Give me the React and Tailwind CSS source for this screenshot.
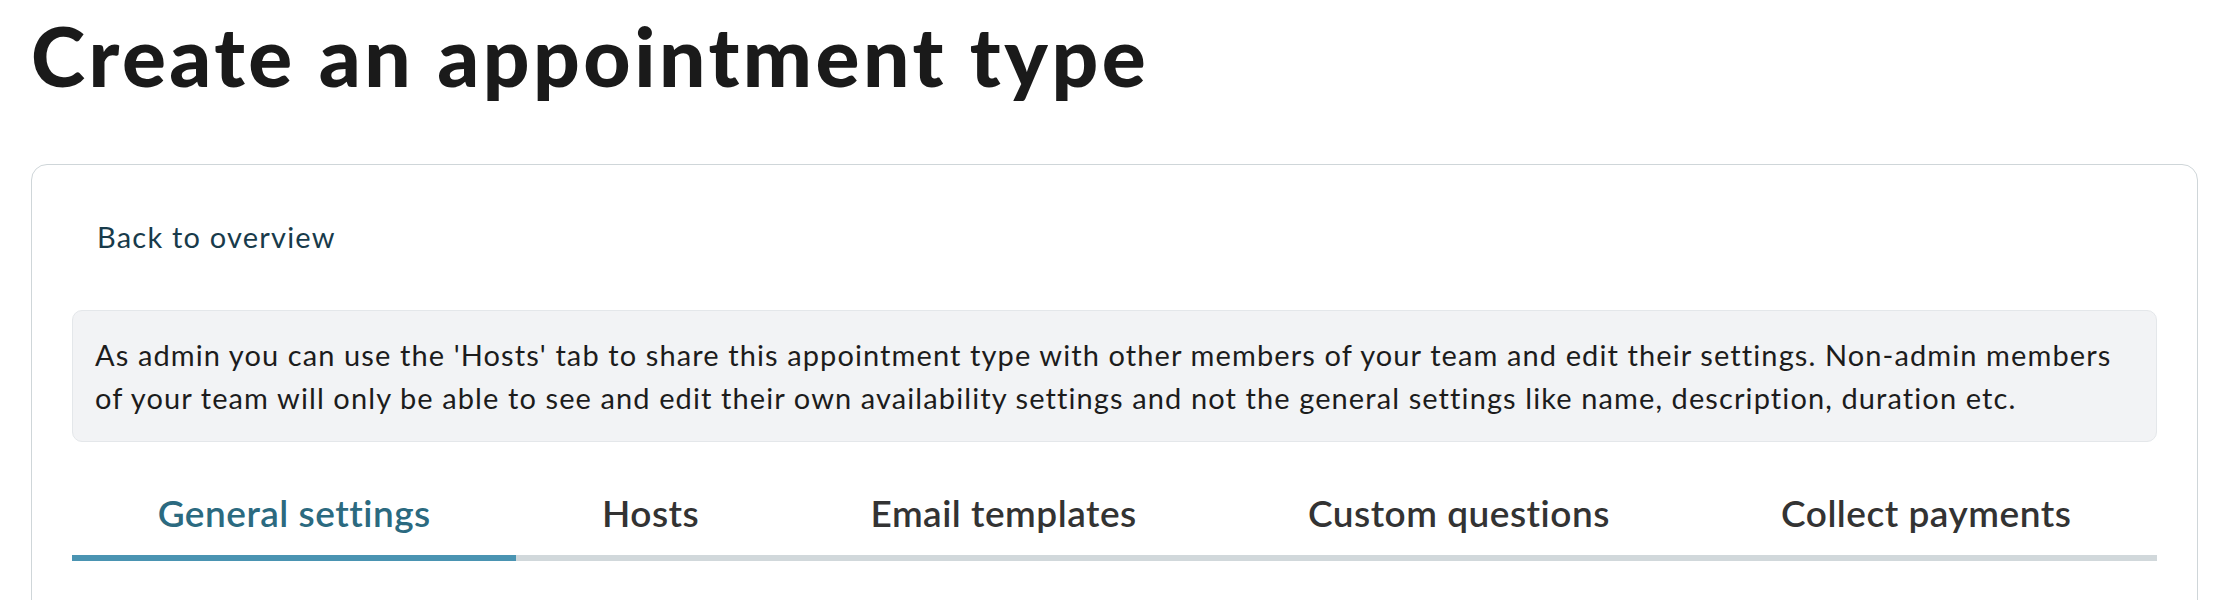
import { useState } from "react";

const tabs = [
  "General settings",
  "Hosts",
  "Email templates",
  "Custom questions",
  "Collect payments",
];

const App = () => {
  const [active, setActive] = useState(0);

  return (
    <div className="min-h-screen bg-white pl-[31px] pr-[34px] font-['Lato',sans-serif]">
      {/* Header */}
      <h1 className="pt-[14px] mb-[68px] font-['Lato_Black','Lato',sans-serif] text-[82px] leading-none font-black tracking-[3.5px] text-[#1a1a1a]">
        Create an appointment type
      </h1>

      {/* Card */}
      <div className="rounded-[16px] border border-[#cfd6d9] bg-white px-[40px] pt-[51px] pb-[120px]">
        <a
          href="#"
          className="ml-[25px] block text-[29px] leading-[42px] tracking-[1.2px] text-[#183b4b]"
        >
          Back to overview
        </a>

        <div className="mt-[52px] rounded-[10px] border border-[#e4e7ea] bg-[#f2f3f5] px-[22px] py-[22px] text-[29px] leading-[43px] tracking-[1.1px] text-[#1c1c1c]">
          As admin you can use the 'Hosts' tab to share this appointment type
          with other members of your team and edit their settings. Non-admin
          members of your team will only be able to see and edit their own
          availability settings and not the general settings like name,
          description, duration etc.
        </div>

        {/* Tabs */}
        <div className="mt-[49px] flex">
          {tabs.map((t, i) => (
            <button
              key={t}
              onClick={() => setActive(i)}
              className={
                i === active
                  ? "flex-auto border-b-[6px] border-[#4a94b2] pb-[20px] text-center text-[37px] leading-[44px] font-semibold tracking-[0.5px] text-[#2b6a80]"
                  : "flex-auto border-b-[6px] border-[#d1d8db] pb-[20px] text-center text-[37px] leading-[44px] font-semibold tracking-[0.5px] text-[#333333]"
              }
            >
              {t}
            </button>
          ))}
        </div>
      </div>
    </div>
  );
};

export default App;
